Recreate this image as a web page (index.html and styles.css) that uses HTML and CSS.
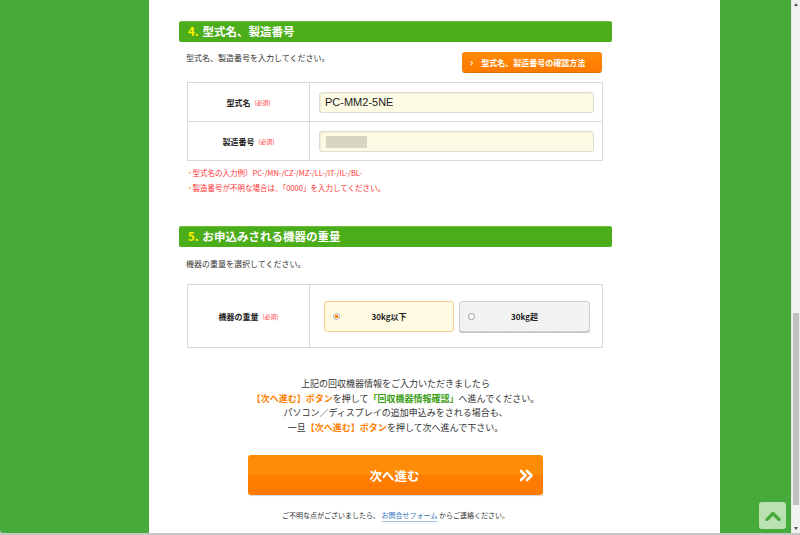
FILE: index.html
```html
<!DOCTYPE html>
<html lang="ja">
<head>
<meta charset="utf-8">
<title>回収申込み</title>
<link rel="stylesheet" href="styles.css">
</head>
<body>
<div class="window">
  <div class="viewport">
    <div class="panel">
      <div class="content">
        <h2 class="sec-head"><span class="num">4.</span>型式名、製造番号</h2>
        <div class="desc-row">
          <p class="desc">型式名、製造番号を入力してください。</p>
          <a class="help-btn" href="#"><span class="arr">›</span>型式名、製造番号の確認方法</a>
        </div>
        <div class="form-table">
          <div class="row">
            <div class="th">型式名<span class="req">(必須)</span></div>
            <div class="td"><div class="input">PC-MM2-5NE</div></div>
          </div>
          <div class="row">
            <div class="th">製造番号<span class="req">(必須)</span></div>
            <div class="td"><div class="input"><span class="mask"></span></div></div>
          </div>
        </div>
        <ul class="notes">
          <li><span class="dot">・</span>型式名の入力例）PC-/MN-/CZ-/MZ-/LL-/IT-/IL-/BL-</li>
          <li><span class="dot">・</span>製造番号が不明な場合は、「0000」を入力してください。</li>
        </ul>

        <h2 class="sec-head sec2"><span class="num">5.</span>お申込みされる機器の重量</h2>
        <p class="desc desc2">機器の重量を選択してください。</p>
        <div class="form-table table2">
          <div class="row row-tall">
            <div class="th">機器の重量<span class="req">(必須)</span></div>
            <div class="td td-radio">
              <div class="radio checked"><span class="circle"></span><span class="rlabel">30kg以下</span></div>
              <div class="radio"><span class="circle"></span><span class="rlabel">30kg超</span></div>
            </div>
          </div>
        </div>

        <div class="guide">
          <p>上記の回収機器情報をご入力いただきましたら</p>
          <p><span class="o">【次へ進む】ボタン</span>を押して<span class="g">「回収機器情報確認」</span>へ進んでください。</p>
          <p>パソコン／ディスプレイの追加申込みをされる場合も、</p>
          <p>一旦<span class="o">【次へ進む】ボタン</span>を押して次へ進んで下さい。</p>
        </div>

        <a class="next-btn" href="#"><span class="next-label">次へ進む</span>
          <svg class="next-arr" width="15" height="13" viewBox="0 0 15 13"><path d="M2 2 L6.5 6.5 L2 11 M8 2 L12.5 6.5 L8 11" fill="none" stroke="#fff" stroke-width="2.6" stroke-linecap="round" stroke-linejoin="round"/></svg>
        </a>

        <p class="footer-note">ご不明な点がございましたら、 <a href="#" class="link">お問合せフォーム</a> からご連絡ください。</p>
      </div>
    </div>
    <a class="to-top" href="#" aria-label="ページトップへ">
      <svg width="16" height="10" viewBox="0 0 16 10"><path d="M2 8.5 L8 2.5 L14 8.5" fill="none" stroke="#47ab3c" stroke-width="3.2" stroke-linecap="round" stroke-linejoin="round"/></svg>
    </a>
  </div>
  <div class="scrollbar">
    <span class="sb-up"></span>
    <span class="sb-thumb"></span>
    <span class="sb-down"></span>
  </div>
</div>
</body>
</html>
```

FILE: styles.css
```css
* { box-sizing: border-box; }
html, body { margin: 0; padding: 0; }
body {
  width: 800px;
  height: 535px;
  overflow: hidden;
  font-family: "Noto Sans CJK JP", "Noto Sans", sans-serif;
  color: #333;
  background: #c6c6c6;
}
.window {
  display: flex;
  height: 533px;
}
.viewport {
  position: relative;
  flex: 1;
  background: #47ab3c;
  padding-left: 149px;
  border-bottom-left-radius: 3px;
  overflow: hidden;
}
.panel {
  width: 571px;
  height: 533px;
  background: #fff;
}
.content {
  margin-left: 30px;
  width: 433px;
  padding-top: 21px;
}
.sec-head {
  margin: 0;
  height: 21px;
  background: #4cad1a;
  border-top: 1px solid #6cc040;
  border-radius: 2px;
  color: #fff;
  font-size: 11.5px;
  font-weight: bold;
  line-height: 19px;
  padding-left: 9px;
}
.sec-head .num { color: #fff200; margin-right: 4px; }
.sec2 { margin-top: 31px; }
.desc-row {
  display: flex;
  justify-content: space-between;
  align-items: flex-start;
  margin-top: 10px;
  padding: 0 10px 0 7px;
}
.desc {
  margin: 0;
  font-size: 8px;
  line-height: 12px;
  color: #333;
}
.desc2 { margin-top: 11px; padding-left: 7px; }
.help-btn {
  display: flex;
  align-items: center;
  width: 140px;
  height: 20px;
  background: linear-gradient(#ff8a0a, #ff7a00);
  border-radius: 3px;
  color: #fff;
  text-decoration: none;
  font-size: 8px;
  font-weight: bold;
  padding-left: 8px;
  box-shadow: 0 1px 0 #e06a00;
}
.help-btn .arr { margin-right: 8px; font-size: 10px; line-height: 10px; }
.form-table {
  margin: 10px 9px 0 8px;
  border: 1px solid #d9d9d9;
}
.table2 { margin-top: 14px; }
.row {
  display: grid;
  grid-template-columns: 122px 1fr;
}
.row + .row { border-top: 1px solid #d9d9d9; }
.th {
  border-right: 1px solid #d9d9d9;
  display: flex;
  align-items: center;
  justify-content: center;
  font-size: 8px;
  font-weight: bold;
  color: #222;
}
.req {
  color: #ff3333;
  font-size: 6px;
  font-weight: normal;
  margin-left: 4px;
}
.td {
  padding: 9px 8px 8px 9px;
}
.input {
  height: 21px;
  background: #fdfbe3;
  border: 1px solid #dcdcd2;
  border-radius: 3px;
  box-shadow: inset 1px 1px 1px rgba(0,0,0,0.06);
  font-family: "Liberation Sans", Arial, sans-serif;
  font-size: 11px;
  line-height: 19px;
  padding-left: 5px;
  color: #222;
  display: flex;
  align-items: center;
}
.mask {
  display: block;
  width: 41px;
  height: 12px;
  margin-left: 1px;
  background: #d6d6c2;
}
.notes {
  list-style: none;
  margin: 4px 0 0;
  padding: 0 0 0 7px;
  font-size: 7.5px;
  line-height: 15px;
  color: #ff3333;
}
.dot { color: #ff8c00; margin-right: -1px; }
.row-tall .td-radio {
  display: flex;
  gap: 5px;
  padding: 16px 13px 15px 14px;
}
.radio {
  position: relative;
  display: flex;
  align-items: center;
  justify-content: center;
  height: 31px;
  border: 1px solid #cfcfcf;
  border-radius: 3px;
  background: #f1f1f1;
  background-image: radial-gradient(#fafafa 0.6px, transparent 0.8px);
  background-size: 3px 3px;
  box-shadow: 0 1px 0 #c4c4c4;
  font-size: 8px;
  font-weight: bold;
  color: #222;
}
.radio:first-child { width: 130px; }
.radio:last-child { width: 131px; }
.radio.checked {
  background: #fffbe3;
  border-color: #f6cc86;
  box-shadow: none;
}
.circle {
  position: absolute;
  left: 8px;
  top: 50%;
  margin-top: -3.5px;
  width: 7px;
  height: 7px;
  border: 1px solid #999;
  border-radius: 50%;
  background: #fff;
}
.checked .circle {
  border-color: #b0b0b0;
  background: radial-gradient(circle, #ff7a00 0 1.6px, #fff 2px);
}
.guide {
  margin-top: 29px;
  text-align: center;
  font-size: 9px;
  line-height: 14.5px;
  color: #333;
}
.guide p { margin: 0; }
.guide .o { color: #ff7f00; font-weight: bold; }
.guide .g { color: #3d9f16; font-weight: bold; }
.next-btn {
  display: flex;
  align-items: center;
  justify-content: center;
  position: relative;
  width: 295px;
  height: 40px;
  margin: 20px auto 0;
  border-radius: 3px;
  background: linear-gradient(#ff8c06 0, #ff8c06 50%, #ff7d00 50%, #ff7b00 100%);
  box-shadow: 0 1px 1px rgba(0,0,0,0.15);
  text-decoration: none;
  color: #fff;
}
.next-label {
  font-size: 12.5px;
  font-weight: bold;
  margin-left: -2px;
}
.next-arr {
  position: absolute;
  right: 9px;
  top: 14px;
}
.footer-note {
  margin: 14px 0 0;
  text-align: center;
  font-size: 7px;
  line-height: 12px;
  color: #333;
}
.link {
  color: #2a6fb8;
  text-decoration: none;
  border-bottom: 1px solid #9cc3e8;
  padding-bottom: 1px;
}
.to-top {
  position: absolute;
  left: 759px;
  top: 502px;
  width: 27px;
  height: 27px;
  border-radius: 3px;
  background: #b9e1b1;
  display: flex;
  align-items: center;
  justify-content: center;
}
.scrollbar {
  position: relative;
  width: 9px;
  height: 533px;
  background: #f1f1f1;
  border-left: 1px solid #e8e8e8;
}
.sb-thumb {
  position: absolute;
  left: 1px;
  top: 313px;
  width: 6px;
  height: 192px;
  background: #c1c1c1;
}
.sb-up, .sb-down {
  position: absolute;
  left: 2px;
  width: 0;
  height: 0;
  border-left: 2.5px solid transparent;
  border-right: 2.5px solid transparent;
}
.sb-up { top: 3px; border-bottom: 3px solid #555; }
.sb-down { top: 527px; border-top: 3px solid #555; }
```
